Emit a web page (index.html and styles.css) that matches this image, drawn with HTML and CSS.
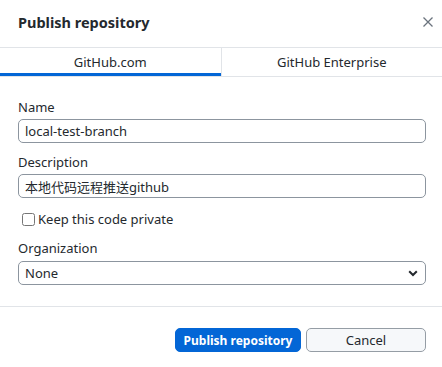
FILE: index.html
```html
<!DOCTYPE html>
<html lang="en">
<head>
    <meta charset="UTF-8">
    <title>Publish repository</title>
    <link rel="stylesheet" href="styles.css">
</head>
<body>
    <div class="dialog">
        <div class="dialog-header">
            <h1>Publish repository</h1>
            <button class="close-button" aria-label="Close">
                <svg width="10" height="10" viewBox="0 0 10 10">
                    <path d="M0.5 0.5 L9.5 9.5 M9.5 0.5 L0.5 9.5" stroke="#6a737d" stroke-width="1.3" fill="none"/>
                </svg>
            </button>
        </div>
        <div class="tabs">
            <div class="tab selected">GitHub.com</div>
            <div class="tab">GitHub Enterprise</div>
        </div>
        <form class="dialog-content">
            <div class="field">
                <label for="name">Name</label>
                <input type="text" id="name" value="local-test-branch">
            </div>
            <div class="field">
                <label for="description">Description</label>
                <input type="text" id="description" value="本地代码远程推送github">
            </div>
            <label class="checkbox-row">
                <input type="checkbox">
                <span>Keep this code private</span>
            </label>
            <div class="field">
                <label for="org">Organization</label>
                <div class="select-wrapper">
                    <select id="org">
                        <option>None</option>
                    </select>
                    <svg class="chevron" width="10" height="7" viewBox="0 0 10 7">
                        <path d="M1.2 1.2 L5 5 L8.8 1.2" stroke="#24292e" stroke-width="2" fill="none"/>
                    </svg>
                </div>
            </div>
        </form>
        <div class="dialog-footer">
            <button class="button primary">Publish repository</button>
            <button class="button">Cancel</button>
        </div>
    </div>
</body>
</html>
```

FILE: styles.css
```css
body {
    margin: 0;
    background: #fff;
    font-family: "Noto Sans", "Noto Sans CJK SC", sans-serif;
    font-size: 13px;
    color: #24292e;
}
.dialog {
    width: 442px;
    display: flex;
    flex-direction: column;
}
.dialog-header {
    height: 48px;
    box-sizing: border-box;
    display: flex;
    align-items: center;
    justify-content: space-between;
    padding: 0 5px 4px 18px;
    border-bottom: 1px solid #e1e4e8;
}
.dialog-header h1 {
    margin: 0;
    font-size: 14.5px;
    font-weight: 700;
    color: #24292e;
}
.close-button {
    background: none;
    border: none;
    padding: 4px;
    width: 18px;
    height: 18px;
    display: flex;
    align-items: center;
    justify-content: center;
    cursor: pointer;
}
.tabs {
    display: flex;
    height: 28px;
    border-bottom: 1px solid #e1e4e8;
}
.tab {
    flex: 1;
    display: flex;
    align-items: center;
    justify-content: center;
    color: #24292e;
}
.tab + .tab {
    border-left: 1px solid #e1e4e8;
}
.tab.selected {
    box-shadow: inset 0 -3px 0 #0366d6;
}
.dialog-content {
    padding: 22px 16px 21px 18px;
    display: flex;
    flex-direction: column;
    border-bottom: 1px solid #e1e4e8;
}
.field {
    display: flex;
    flex-direction: column;
}
.field label {
    line-height: 16px;
    margin-bottom: 4px;
}
.field + .field {
    margin-top: 11px;
}
input[type="text"], select {
    font-family: inherit;
    font-size: 13px;
    color: #24292e;
    height: 24px;
    box-sizing: border-box;
    border: 1px solid #8c959f;
    border-radius: 5px;
    padding: 0 6px;
    outline: none;
    background: #fff;
}
.checkbox-row {
    display: flex;
    align-items: center;
    height: 16px;
    margin: 13px 0 13px;
}
.checkbox-row input {
    margin: 0 3px 0 4px;
    width: 13px;
    height: 13px;
}
.select-wrapper {
    position: relative;
    display: flex;
}
.select-wrapper select {
    flex: 1;
    appearance: none;
    margin-top: 1px;
}
.chevron {
    position: absolute;
    right: 8px;
    top: 10px;
}
.dialog-footer {
    display: flex;
    justify-content: flex-end;
    gap: 5px;
    padding: 21px 16px 0 0;
}
.button {
    height: 24px;
    font-family: inherit;
    font-size: 13px;
    border-radius: 5px;
    border: 1px solid #959da5;
    background: #f6f8fa;
    color: #24292e;
    padding: 0;
    width: 120px;
    white-space: nowrap;
    cursor: pointer;
}
.button.primary {
    width: 126px;
    font-size: 12px;
    background: #0366d6;
    border-color: #0366d6;
    color: #fff;
    font-weight: 700;
}
```
